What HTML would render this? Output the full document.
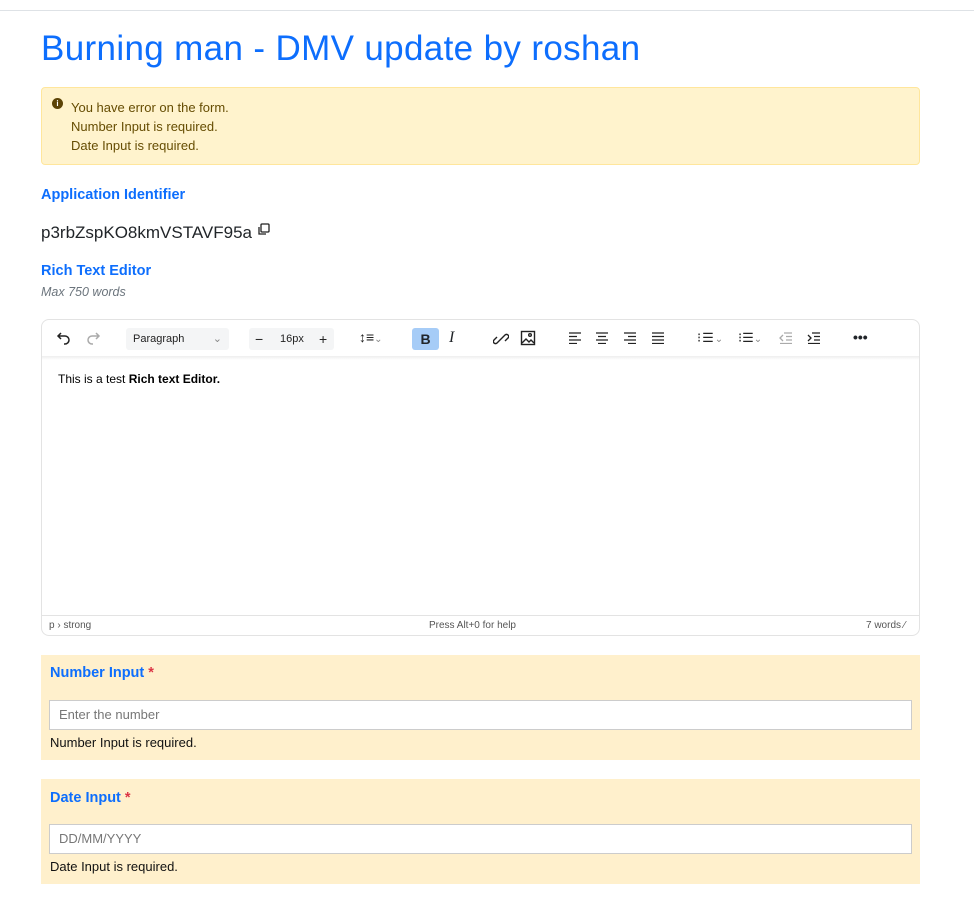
<!DOCTYPE html>
<html><head><meta charset="utf-8"><style>
*{box-sizing:border-box;margin:0;padding:0}
body{width:974px;height:899px;background:#fff;font-family:"Liberation Sans",sans-serif;position:relative;overflow:hidden;color:#212529}
.a{position:absolute}
.blue{color:#0d6efd}
.tb svg{position:absolute}
</style></head><body>
<div class="a" style="left:0;top:10px;width:974px;height:1px;background:#dee2e6"></div>
<div class="a blue" style="left:41px;top:29px;font-size:35px;letter-spacing:0.35px;white-space:nowrap">Burning man - DMV update by roshan</div>

<div class="a" style="left:41px;top:87px;width:879px;height:78px;background:#fff3cd;border:1px solid #ffe69c;border-radius:4px"></div>
<div class="a" style="left:52px;top:98px;width:11px;height:11px;border-radius:50%;background:#5c4306;color:#fff;font-size:8px;font-weight:bold;text-align:center;line-height:11px">i</div>
<div class="a" style="left:71px;top:98px;font-size:13px;line-height:19px;color:#664d03">You have error on the form.<br>Number Input is required.<br>Date Input is required.</div>

<div class="a blue" style="left:41px;top:187px;font-size:14.5px;font-weight:bold">Application Identifier</div>
<div class="a" style="left:41px;top:223px;font-size:17px;color:#212529">p3rbZspKO8kmVSTAVF95a</div>
<svg class="a" style="left:257px;top:223px" width="13" height="13" viewBox="0 0 13 13" fill="none" stroke="#222" stroke-width="1.3"><rect x="4" y="1" width="8" height="8" rx="1"/><path d="M2 4v7h7"/></svg>
<div class="a blue" style="left:41px;top:263px;font-size:14.5px;font-weight:bold">Rich Text Editor</div>
<div class="a" style="left:41px;top:285px;font-size:12.5px;font-style:italic;color:#6c757d">Max 750 words</div>

<div class="a" style="left:41px;top:319px;width:879px;height:317px;border:1px solid #e3e3e3;border-radius:8px"></div>
<div class="a" style="left:42px;top:356px;width:877px;height:4px;background:linear-gradient(#eee,#fff)"></div>
<div class="a tb" style="left:0;top:0">
<svg style="left:56px;top:330px" width="16" height="16" viewBox="0 0 16 16" fill="none" stroke="#222" stroke-width="1.5"><path d="M5 3L2 6l3 3M2 6h7a4 4 0 010 8H8"/></svg>
<svg style="left:85px;top:330px" width="16" height="16" viewBox="0 0 16 16" fill="none" stroke="#aaa" stroke-width="1.5"><path d="M11 3l3 3-3 3M14 6H7a4 4 0 000 8h1"/></svg>
</div>
<div class="a" style="left:126px;top:328px;width:103px;height:22px;background:#f4f5f6;border-radius:3px;font-size:11px;line-height:22px;padding-left:7px;color:#222">Paragraph<span style="position:absolute;right:7px;color:#888">⌄</span></div>
<div class="a" style="left:249px;top:328px;width:85px;height:22px;background:#f4f5f6;border-radius:3px;font-size:11px;line-height:22px;color:#222"><span class="a" style="left:6px;font-size:14px">−</span><span class="a" style="left:31px">16px</span><span class="a" style="left:70px;font-size:14px">+</span></div>
<div class="a" style="left:359px;top:329px;font-size:14px;color:#222">↕≡<span style="font-size:10px;color:#888">⌄</span></div>
<div class="a" style="left:412px;top:328px;width:27px;height:22px;background:#a6ccf7;border-radius:3px;text-align:center;font-weight:bold;font-size:14px;line-height:22px">B</div>
<div class="a" style="left:449px;top:329px;font-family:'Liberation Serif',serif;font-style:italic;font-size:16px">I</div>
<svg class="a" style="left:493px;top:331px" width="16" height="16" viewBox="0 0 16 16" fill="none" stroke="#222" stroke-width="1.4"><path d="M7 9l-3 3a2 2 0 01-3-3l3-3M9 7l3-3a2 2 0 013 3l-3 3M6 10l4-4"/></svg>
<svg class="a" style="left:520px;top:330px" width="16" height="16" viewBox="0 0 16 16" fill="none" stroke="#222" stroke-width="1.4"><rect x="1.5" y="1.5" width="13" height="13"/><path d="M2 13l4-4 3 3 2-2 3 3"/><circle cx="10" cy="5" r="1.3"/></svg>
<svg class="a" style="left:568px;top:332px" width="110" height="12" viewBox="0 0 110 12" stroke="#222" stroke-width="1.3"><path d="M1 1h12M1 4.5h8M1 8h12M1 11.5h8"/><path d="M28 1h12M30 4.5h8M28 8h12M30 11.5h8"/><path d="M56 1h12M60 4.5h8M56 8h12M60 11.5h8"/><path d="M84 1h12M84 4.5h12M84 8h12M84 11.5h12"/></svg>
<div class="a" style="left:697px;top:330px;font-size:13px;color:#222;letter-spacing:1px">⁝☰<span style="font-size:10px;color:#888">⌄</span></div>
<div class="a" style="left:738px;top:330px;font-size:13px;color:#222">⁝☰<span style="font-size:10px;color:#888">⌄</span></div>
<svg class="a" style="left:779px;top:332px" width="50" height="12" viewBox="0 0 50 12" stroke-width="1.3"><path d="M5 1h8M7 4.5h6M7 8h6M1 11.5h12M4 3L1 6l3 3" stroke="#aaa" fill="none"/><path d="M33 1h8M35 4.5h6M35 8h6M29 11.5h12M29 3l3 3-3 3" stroke="#222" fill="none"/></svg>
<div class="a" style="left:853px;top:329px;font-size:14px;font-weight:bold">•••</div>

<div class="a" style="left:58px;top:372px;font-size:12px;color:#000">This is a test <b>Rich text Editor.</b></div>
<div class="a" style="left:42px;top:615px;width:877px;height:1px;background:#e3e3e3"></div>
<div class="a" style="left:49px;top:620px;font-size:10px;color:#555">p › strong</div>
<div class="a" style="left:429px;top:620px;font-size:10px;color:#555">Press Alt+0 for help</div>
<div class="a" style="left:866px;top:620px;font-size:10px;color:#555">7 words ⁄</div>

<div class="a" style="left:41px;top:655px;width:879px;height:105px;background:#fff0cc"></div>
<div class="a blue" style="left:50px;top:665px;font-size:14.5px;font-weight:bold">Number Input <span style="color:#dc3545">*</span></div>
<div class="a" style="left:49px;top:700px;width:863px;height:30px;background:#fff;border:1px solid #ccc;font-size:13px;line-height:28px;padding-left:9px;color:#777">Enter the number</div>
<div class="a" style="left:50px;top:735px;font-size:13px;color:#111">Number Input is required.</div>

<div class="a" style="left:41px;top:779px;width:879px;height:105px;background:#fff0cc"></div>
<div class="a blue" style="left:50px;top:790px;font-size:14.5px;font-weight:bold">Date Input <span style="color:#dc3545">*</span></div>
<div class="a" style="left:49px;top:824px;width:863px;height:30px;background:#fff;border:1px solid #ccc;font-size:13px;line-height:28px;padding-left:9px;color:#777">DD/MM/YYYY</div>
<div class="a" style="left:50px;top:859px;font-size:13px;color:#111">Date Input is required.</div>
</body></html>
